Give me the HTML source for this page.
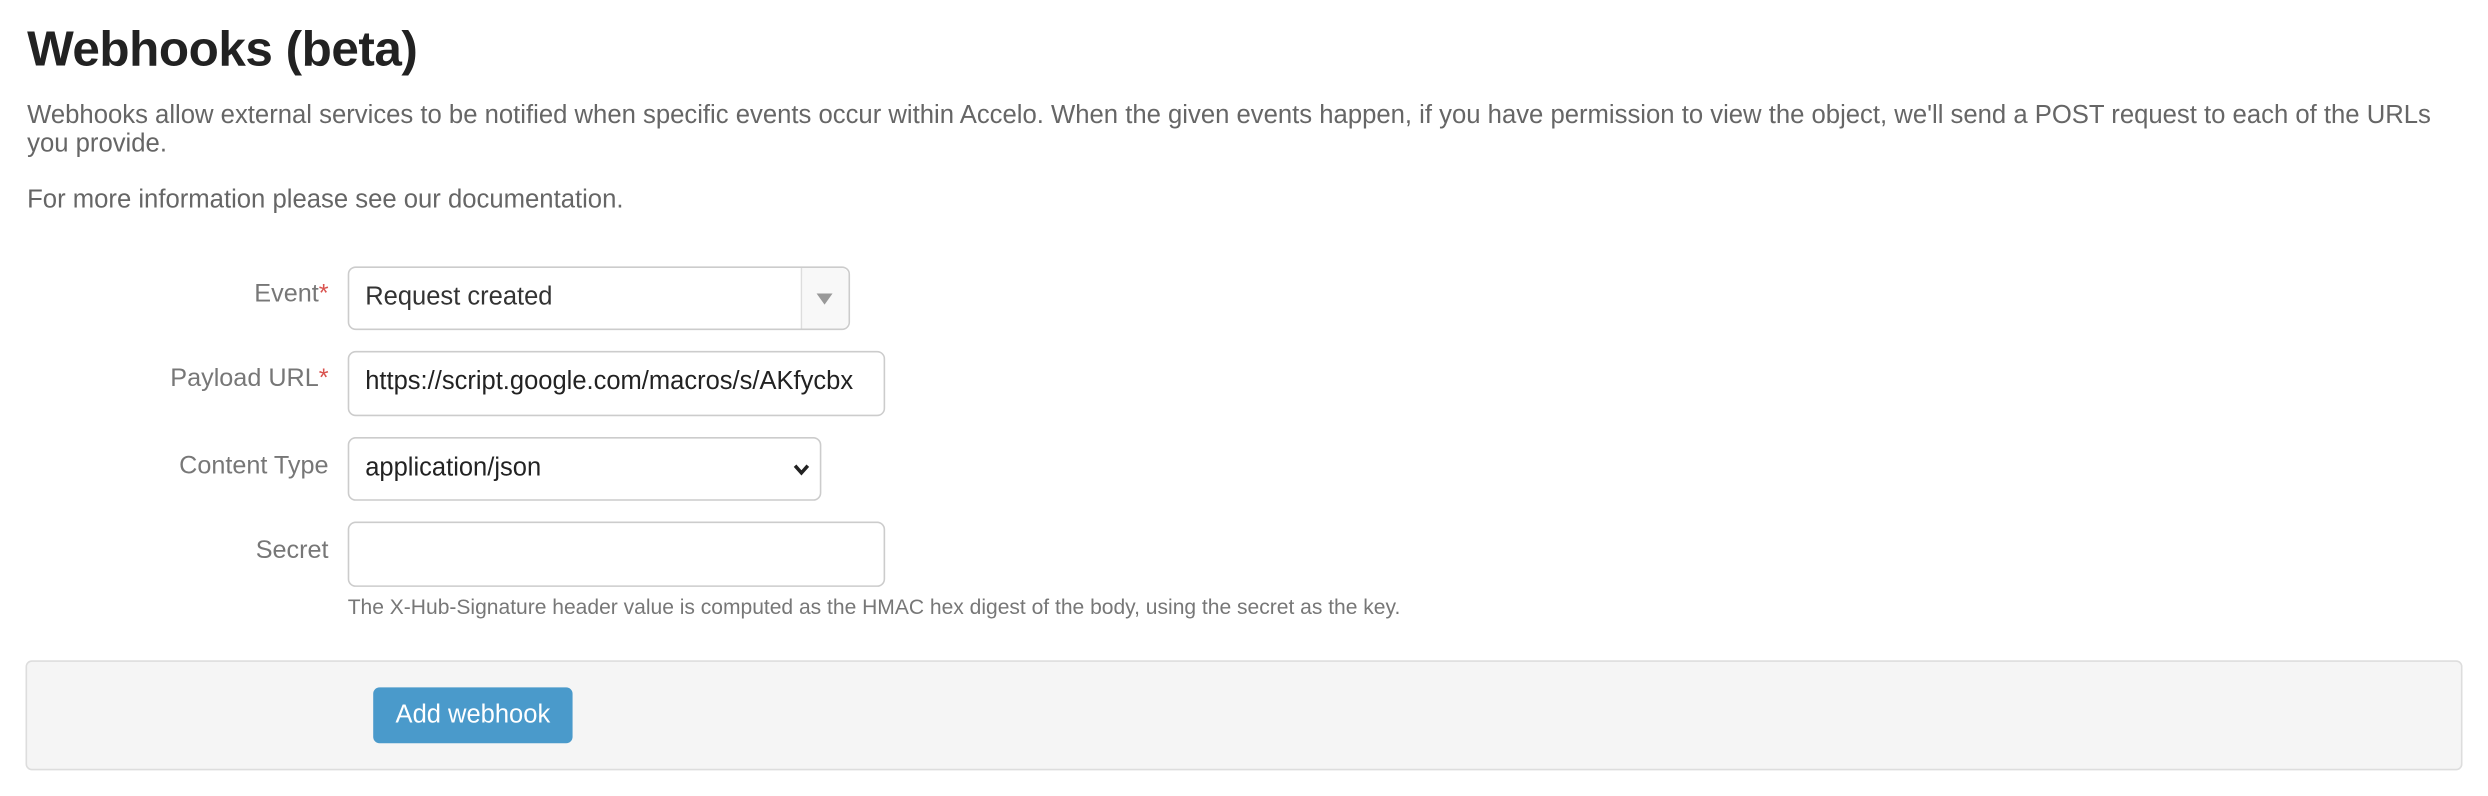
<!DOCTYPE html>
<html><head><meta charset="utf-8"><style>
html,body{margin:0;padding:0;background:#fff;width:2488px;height:796px;overflow:hidden}
#w{width:1560px;height:500px;transform:scale(1.5949);transform-origin:0 0;position:relative;font-family:"Liberation Sans",Arial,sans-serif}
.a{position:absolute;white-space:nowrap}
h1{position:absolute;left:17px;top:13px;margin:0;font-size:31px;font-weight:bold;color:#222;letter-spacing:-0.3px}
.p{color:#666;font-size:16.1px;left:17px}
.lbl{color:#777;font-size:15.8px;text-align:right;width:200px;left:6px}
.lbl b{color:#d9534f;font-weight:normal}
.box{position:absolute;left:218px;border:1px solid #ccc;border-radius:5px;background:#fff;box-sizing:border-box;font-size:16px;color:#333}
.box span{position:absolute;left:10px;top:10px;white-space:nowrap}
</style></head><body><div id="w">
<h1>Webhooks (beta)</h1>
<div class="a p" style="top:63px">Webhooks allow external services to be notified when specific events occur within Accelo. When the given events happen, if you have permission to view the object, we'll send a POST request to each of the URLs</div>
<div class="a p" style="top:81px">you provide.</div>
<div class="a p" style="top:116px">For more information please see our documentation.</div>

<div class="a lbl" style="top:176px">Event<b>*</b></div>
<div class="box" style="top:167px;width:315px;height:40px"><span>Request created</span>
<div style="position:absolute;right:0;top:0;width:29px;height:38px;border-left:1px solid #ddd;background:#f8f8f8;border-radius:0 5px 5px 0"></div>
<div style="position:absolute;right:10px;top:16px;width:0;height:0;border-left:5px solid transparent;border-right:5px solid transparent;border-top:7px solid #999"></div></div>

<div class="a lbl" style="top:229px">Payload URL<b>*</b></div>
<div class="box" style="top:220px;width:337px;height:41px;overflow:hidden"><span style="color:#222">https://script.google.com/macros/s/AKfycbx</span><div style="position:absolute;right:0;top:0;width:3px;height:40px;background:#fff"></div></div>

<div class="a lbl" style="top:284px">Content Type</div>
<div class="box" style="top:274px;width:297px;height:40px"><span style="color:#222">application/json</span>
<svg style="position:absolute;right:6px;top:15px" width="11" height="9" viewBox="0 0 11 9"><path d="M1.5 2 L5.5 6.5 L9.5 2" stroke="#222" stroke-width="2.2" fill="none"/></svg></div>

<div class="a lbl" style="top:337px">Secret</div>
<div class="box" style="top:327px;width:337px;height:41px"></div>
<div class="a" style="left:218px;top:373px;font-size:13.2px;color:#777">The X-Hub-Signature header value is computed as the HMAC hex digest of the body, using the secret as the key.</div>

<div style="position:absolute;left:16px;top:414px;width:1528px;height:69px;box-sizing:border-box;background:#f5f5f5;border:1px solid #ddd;border-radius:4px"></div>
<div style="position:absolute;left:234px;top:431px;width:125px;height:35px;background:#4a9acb;border-radius:4px;color:#fff;font-size:16px;text-align:center;line-height:35px">Add webhook</div>
</div></body></html>
